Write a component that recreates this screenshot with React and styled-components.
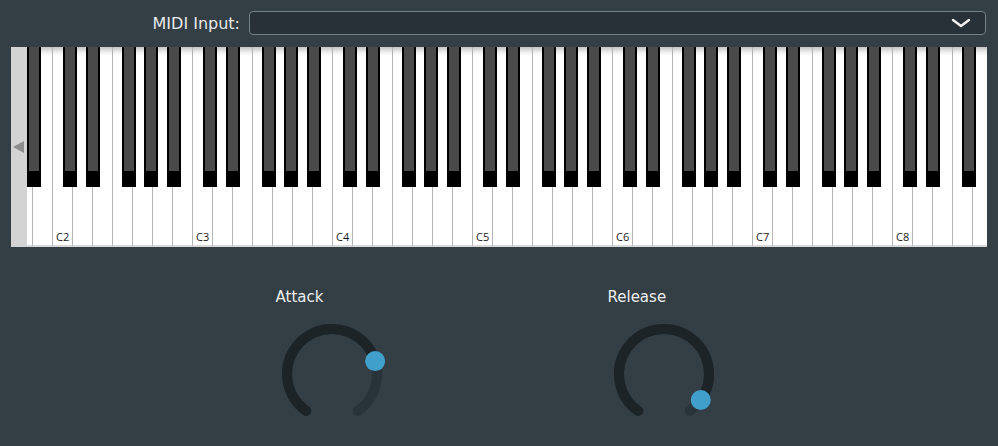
import React from 'react';
import styled, { createGlobalStyle } from 'styled-components';

const Global = createGlobalStyle`
  html, body { margin: 0; padding: 0; background: #333e45; }
  * { box-sizing: border-box; }
`;

const Page = styled.div`
  width: 998px;
  height: 446px;
  background: #333e45;
  font-family: "DejaVu Sans", Verdana, sans-serif;
  color: #e8eaeb;
  display: flex;
  flex-direction: column;
  overflow: hidden;
`;

const Header = styled.div`
  display: flex;
  align-items: center;
  justify-content: flex-end;
  gap: 9px;
  padding: 11px 12px 0 0;
  height: 35px;
`;

const InputLabel = styled.label`
  font-size: 16px;
  color: #e6e8e9;
  padding-top: 1px;
`;

const Select = styled.div`
  width: 737px;
  height: 24px;
  border: 1px solid #738087;
  border-radius: 4px;
  background: #273137;
  display: flex;
  align-items: center;
  justify-content: flex-end;
  padding-right: 14px;
`;

const Keyboard = styled.div`
  margin: 12px 11px 0 11px;
  height: 200px;
  display: flex;
`;

const Strip = styled.div`
  width: 16px;
  background: #d3d3d3;
  display: flex;
  align-items: center;
  padding-left: 2px;
`;

const Arrow = styled.div`
  width: 0;
  height: 0;
  border-top: 6px solid transparent;
  border-bottom: 6px solid transparent;
  border-right: 11px solid #8c8c8c;
`;

const Keys = styled.div`
  flex: 1;
  position: relative;
  overflow: hidden;
  display: flex;
  background: #fff;
`;

const WhiteRow = styled.div`
  display: flex;
  margin-left: -15px;
  height: 100%;
`;

const WhiteKey = styled.div`
  flex: 0 0 20px;
  height: 100%;
  border-left: 1px solid #b4b4b4;
  border-bottom: 2px solid #d8d8d8;
  background: linear-gradient(to bottom, #c4c4c4 0, #f4f4f4 6px, #fff 9px);
  display: flex;
  align-items: flex-end;
  padding: 0 0 1px 3px;
  font-family: "Open Sans", sans-serif;
  font-size: 11px;
  color: #1a1a1a;
`;

const BlackKey = styled.div`
  position: absolute;
  top: 0;
  width: 14px;
  height: 140px;
  border-left: 2px solid #000;
  border-right: 2px solid #000;
  background: linear-gradient(to bottom, #4a4a4a 0, #4a4a4a 124px, #000 124px);
`;

const Controls = styled.div`
  display: flex;
  justify-content: center;
  gap: 220px;
  padding-top: 40px;
  padding-right: 3px;
`;

const KnobBox = styled.div`
  width: 112px;
  display: flex;
  flex-direction: column;
  gap: 12px;
`;

const KnobLabel = styled.div`
  font-size: 15px;
  line-height: 20px;
  color: #eceeef;
`;

const NAMES = ['C', 'D', 'E', 'F', 'G', 'A', 'B'];
const whites = [{ n: 'A1' }, { n: 'B1' }];
for (let o = 2; o <= 7; o++) NAMES.forEach((n) => whites.push({ n: n + o }));
['C', 'D', 'E', 'F', 'G'].forEach((n) => whites.push({ n: n + 8 }));

const blacks = [0];
for (let o = 0; o <= 6; o++) {
  [11, 34, 70, 92, 115].forEach((off) => {
    const x = 25 + 140 * o + off;
    if (x + 14 <= 960) blacks.push(x);
  });
}

const CX = 56;
const CY = 55;
const R = 45;
const START = -145;
const END = 145;

function pt(deg) {
  const a = (deg * Math.PI) / 180;
  return [CX + R * Math.sin(a), CY - R * Math.cos(a)];
}

function arc(a0, a1) {
  const [x0, y0] = pt(a0);
  const [x1, y1] = pt(a1);
  const large = a1 - a0 > 180 ? 1 : 0;
  return `M ${x0} ${y0} A ${R} ${R} 0 ${large} 1 ${x1} ${y1}`;
}

function Knob({ label, value }) {
  const ang = START + (END - START) * value;
  const [dx, dy] = pt(ang);
  return (
    <KnobBox>
      <KnobLabel>{label}</KnobLabel>
      <svg width="112" height="110" viewBox="0 0 112 110">
        <path d={arc(START, END)} stroke="#29333a" strokeWidth="10" fill="none" strokeLinecap="round" />
        <path d={arc(START, ang)} stroke="#1c2428" strokeWidth="10" fill="none" strokeLinecap="round" />
        <circle cx={dx} cy={dy} r="10" fill="#41a0cb" />
      </svg>
    </KnobBox>
  );
}

export default function App() {
  return (
    <Page>
      <Global />
      <Header>
        <InputLabel>MIDI Input:</InputLabel>
        <Select>
          <svg width="20" height="10" viewBox="0 0 20 10">
            <polyline points="2,2 10,8 18,2" fill="none" stroke="#f2f2f2" strokeWidth="2.4" strokeLinecap="round" strokeLinejoin="round" />
          </svg>
        </Select>
      </Header>
      <Keyboard>
        <Strip>
          <Arrow />
        </Strip>
        <Keys>
          <WhiteRow>
            {whites.map((k) => (
              <WhiteKey key={k.n}>{k.n.startsWith('C') ? k.n : ''}</WhiteKey>
            ))}
          </WhiteRow>
          {blacks.map((x) => (
            <BlackKey key={x} style={{ left: x }} />
          ))}
        </Keys>
      </Keyboard>
      <Controls>
        <Knob label="Attack" value={0.753} />
        <Knob label="Release" value={0.932} />
      </Controls>
    </Page>
  );
}
